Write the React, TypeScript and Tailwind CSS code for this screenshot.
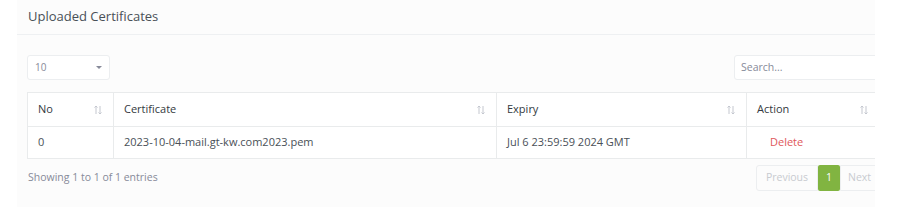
import React from 'react';

function SortIcon() {
  return (
    <svg width="10" height="12" viewBox="0 0 10 12" fill="none" stroke="#c4c7cf" strokeWidth="1">
      <path d="M3 10V2M1.5 3.5L3 2l1.5 1.5" />
      <path d="M7 2v8M5.5 8.5L7 10l1.5-1.5" />
    </svg>
  );
}

export default function App() {
  const cols = [
    { label: 'No', w: 'w-[86px]' },
    { label: 'Certificate', w: 'w-[383px]' },
    { label: 'Expiry', w: 'w-[250px]' },
    { label: 'Action', w: 'w-[133px]' },
  ];

  return (
    <div className="w-[922px] h-[217px] bg-white" style={{ fontFamily: '"Open Sans", "Liberation Sans", sans-serif' }}>
      <div className="ml-[17px] w-[858px] h-[207px] bg-[#fcfcfc] overflow-hidden">
        {/* Header */}
        <div className="h-[35px] border-b border-[#eef0f2] pl-[11px] flex items-center">
          <h5 className="text-[13px] font-medium text-[#495057]">Uploaded Certificates</h5>
        </div>

        <div className="w-[900px] pl-[10px] pt-[20px]">
          {/* Controls */}
          <div className="flex items-center justify-between w-[879px]">
            <div className="w-[83px] h-[25px] border border-[#eceef0] rounded-[3px] bg-white flex items-center justify-between px-[7px]">
              <span className="text-[10px] text-[#878a99]">10</span>
              <svg width="6" height="4" viewBox="0 0 6 4"><path d="M0 0h6L3 3z" fill="#878a99" /></svg>
            </div>
            <div className="w-[172px] h-[25px] border border-[#eceef0] rounded-[3px] bg-white flex items-center px-[6px]">
              <span className="text-[10.5px] text-[#878a99]">Search...</span>
            </div>
          </div>

          {/* Table */}
          <table className="mt-[12px] border-collapse bg-white text-[11px] text-[#495057]">
            <thead>
              <tr className="h-[34px]">
                {cols.map(c => (
                  <th key={c.label} className={`${c.w} border border-[#e9ebec] px-[10px] text-left font-medium text-[#343a40]`}>
                    <div className="flex items-center justify-between">
                      <span>{c.label}</span>
                      <SortIcon />
                    </div>
                  </th>
                ))}
              </tr>
            </thead>
            <tbody>
              <tr className="h-[32px]">
                <td className="border border-[#e9ebec] px-[10px]">0</td>
                <td className="border border-[#e9ebec] px-[10px]">2023-10-04-mail.gt-kw.com2023.pem</td>
                <td className="border border-[#e9ebec] px-[10px]">Jul 6 23:59:59 2024 GMT</td>
                <td className="border border-[#e9ebec] px-[10px]">
                  <span className="ml-[13px] text-[#e0575b]">Delete</span>
                </td>
              </tr>
            </tbody>
          </table>

          {/* Footer */}
          <div className="flex items-center mt-[6px]">
            <span className="w-[729px] text-[10.5px] text-[#878a99] pl-[1px]">Showing 1 to 1 of 1 entries</span>
            <div className="flex items-center h-[26px]">
              <span className="h-[26px] w-[62px] border border-[#eceef0] rounded-l-[3px] flex items-center justify-center text-[10.5px] text-[#c8cbd0]">Previous</span>
              <span className="h-[26px] w-[22px] bg-[#81b441] rounded-[2px] flex items-center justify-center text-[10.5px] text-white">1</span>
              <span className="h-[26px] w-[40px] border border-[#eceef0] rounded-r-[3px] flex items-center pl-[7px] text-[10.5px] text-[#c8cbd0]">Next</span>
            </div>
          </div>
        </div>
      </div>
    </div>
  );
}
